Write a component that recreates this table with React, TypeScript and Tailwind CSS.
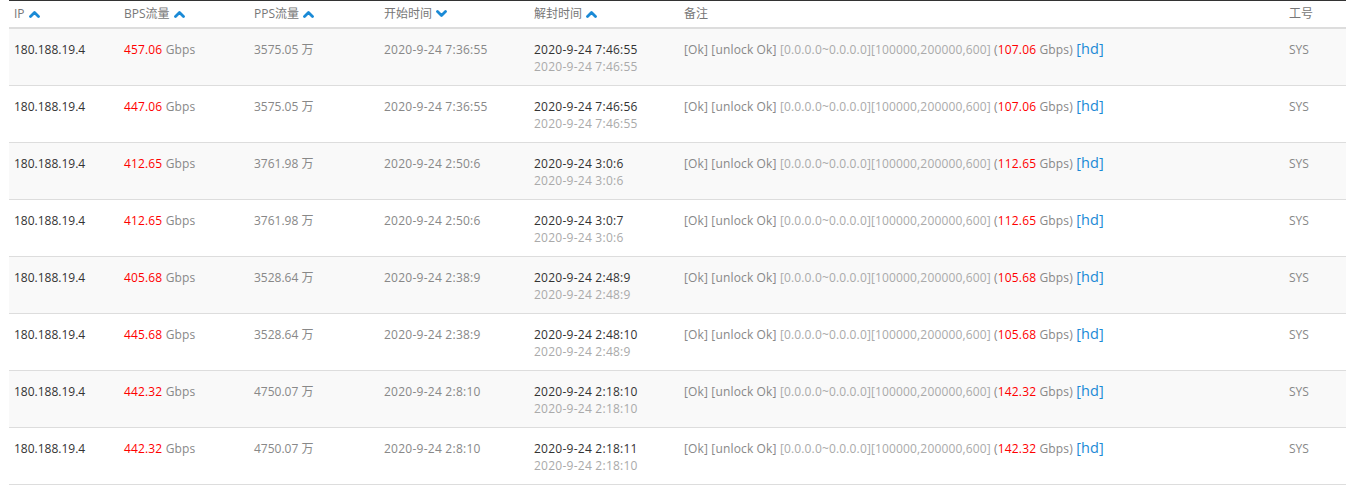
import React from "react";

type Row = {
  bps: string;
  pps: string;
  start: string;
  end1: string;
  end2: string;
  note: string;
};

const rows: Row[] = [
  { bps: "457.06", pps: "3575.05", start: "2020-9-24 7:36:55", end1: "2020-9-24 7:46:55", end2: "2020-9-24 7:46:55", note: "107.06" },
  { bps: "447.06", pps: "3575.05", start: "2020-9-24 7:36:55", end1: "2020-9-24 7:46:56", end2: "2020-9-24 7:46:55", note: "107.06" },
  { bps: "412.65", pps: "3761.98", start: "2020-9-24 2:50:6", end1: "2020-9-24 3:0:6", end2: "2020-9-24 3:0:6", note: "112.65" },
  { bps: "412.65", pps: "3761.98", start: "2020-9-24 2:50:6", end1: "2020-9-24 3:0:7", end2: "2020-9-24 3:0:6", note: "112.65" },
  { bps: "405.68", pps: "3528.64", start: "2020-9-24 2:38:9", end1: "2020-9-24 2:48:9", end2: "2020-9-24 2:48:9", note: "105.68" },
  { bps: "445.68", pps: "3528.64", start: "2020-9-24 2:38:9", end1: "2020-9-24 2:48:10", end2: "2020-9-24 2:48:9", note: "105.68" },
  { bps: "442.32", pps: "4750.07", start: "2020-9-24 2:8:10", end1: "2020-9-24 2:18:10", end2: "2020-9-24 2:18:10", note: "142.32" },
  { bps: "442.32", pps: "4750.07", start: "2020-9-24 2:8:10", end1: "2020-9-24 2:18:11", end2: "2020-9-24 2:18:10", note: "142.32" },
];

const Up = () => (
  <svg width="11" height="8" viewBox="0 0 11 8" className="inline-block ml-[4px] -mt-[2px]">
    <polyline points="1.5,6.5 5.5,2.5 9.5,6.5" fill="none" stroke="#1a8ad6" strokeWidth="2.8" strokeLinecap="round" strokeLinejoin="round" />
  </svg>
);
const Down = () => (
  <svg width="11" height="8" viewBox="0 0 11 8" className="inline-block ml-[4px] -mt-[2px]">
    <polyline points="1.5,1.5 5.5,5.5 9.5,1.5" fill="none" stroke="#1a8ad6" strokeWidth="2.8" strokeLinecap="round" strokeLinejoin="round" />
  </svg>
);

const cols = "grid grid-cols-[110px_130px_130px_150px_150px_605px_1fr]";

export default function App() {
  return (
    <div
      className="w-[1346px] h-[492px] overflow-hidden bg-white text-[12px] leading-[17px]"
      style={{ fontFamily: '"Open Sans", "Noto Sans", "Noto Sans CJK SC", sans-serif' }}
    >
      <div className="h-[1px] bg-[#333] ml-[9px]" />
      <div className="ml-[9px] w-[1337px]">
        <div className={`${cols} h-[28px] pb-[1px] items-center border-b-2 border-[#dddddd] text-[#777]`}>
          <div className="pl-[5px]">IP<Up /></div>
          <div className="pl-[5px]">BPS流量<Up /></div>
          <div className="pl-[5px]">PPS流量<Up /></div>
          <div className="pl-[5px]">开始时间<Down /></div>
          <div className="pl-[5px]">解封时间<Up /></div>
          <div className="pl-[5px]">备注</div>
          <div className="pl-[5px]">工号</div>
        </div>
        {rows.map((r, i) => (
          <div
            key={i}
            className={`${cols} h-[57px] border-b border-[#dddddd] pt-[12px] ${i % 2 === 0 ? "bg-[#f9f9f9]" : "bg-white"}`}
          >
            <div className="pl-[5px] text-[#333]">180.188.19.4</div>
            <div className="pl-[5px] text-[#888] tracking-[0.15px]">
              <span className="text-[#ff0000]">{r.bps}</span> Gbps
            </div>
            <div className="pl-[5px] text-[#888]">{r.pps} 万</div>
            <div className="pl-[5px] text-[#888] tracking-[0.25px]">{r.start}</div>
            <div className="pl-[5px] tracking-[0.25px]">
              <div className="text-[#333]">{r.end1}</div>
              <div className="text-[#aaa]">{r.end2}</div>
            </div>
            <div className="pl-[5px] text-[#888] whitespace-nowrap tracking-[0.15px]">
              [Ok] [unlock Ok] <span className="text-[#aaa]">[0.0.0.0~0.0.0.0][100000,200000,600]</span>{" "}
              (<span className="text-[#ff0000]">{r.note}</span> Gbps){" "}
              <span className="text-[14.5px] leading-[15px] text-[#1a8ad6]">[hd]</span>
            </div>
            <div className="pl-[5px] text-[#888]">SYS</div>
          </div>
        ))}
      </div>
    </div>
  );
}
